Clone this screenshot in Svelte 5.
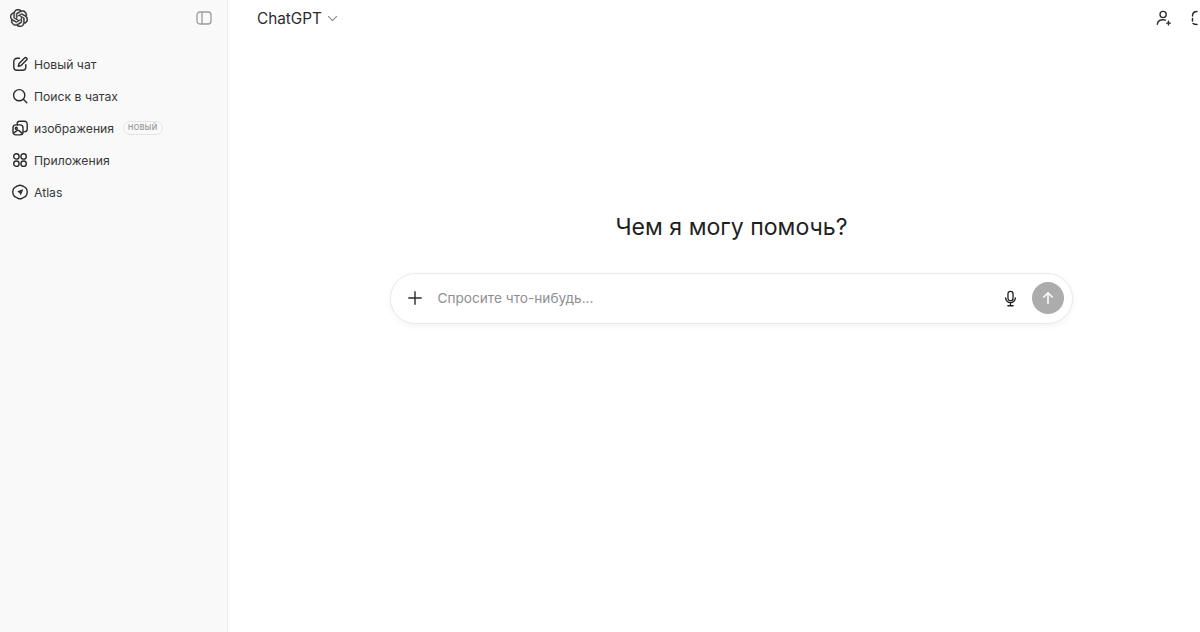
<script>
  const items = [
    { label: 'Новый чат', icon: 'edit' },
    { label: 'Поиск в чатах', icon: 'search' },
    { label: 'изображения', icon: 'images', badge: 'НОВЫЙ' },
    { label: 'Приложения', icon: 'apps' },
    { label: 'Atlas', icon: 'atlas' }
  ];
</script>

<div class="shell">
  <aside class="sidebar">
    <div class="side-head">
      <svg class="logo" viewBox="0 0 24 24" fill="#2f2f2f" stroke="#2f2f2f" stroke-width="0.4"><path d="M22.2819 9.8211a5.9847 5.9847 0 0 0-.5157-4.9108 6.0462 6.0462 0 0 0-6.5098-2.9A6.0651 6.0651 0 0 0 4.9807 4.1818a5.9847 5.9847 0 0 0-3.9977 2.9 6.0462 6.0462 0 0 0 .7427 7.0966 5.98 5.98 0 0 0 .511 4.9107 6.051 6.051 0 0 0 6.5146 2.9001A5.9847 5.9847 0 0 0 13.2599 24a6.0557 6.0557 0 0 0 5.7718-4.2058 5.9894 5.9894 0 0 0 3.9977-2.9001 6.0557 6.0557 0 0 0-.7475-7.0729zm-9.022 12.6081a4.4755 4.4755 0 0 1-2.8764-1.0408l.1419-.0804 4.7783-2.7582a.7948.7948 0 0 0 .3927-.6813v-6.7369l2.02 1.1686a.071.071 0 0 1 .038.052v5.5826a4.504 4.504 0 0 1-4.4945 4.4944zm-9.6607-4.1254a4.4708 4.4708 0 0 1-.5346-3.0137l.142.0852 4.783 2.7582a.7712.7712 0 0 0 .7806 0l5.8428-3.3685v2.3324a.0804.0804 0 0 1-.0332.0615L9.74 19.9502a4.4992 4.4992 0 0 1-6.1408-1.6464zM2.3408 7.8956a4.485 4.485 0 0 1 2.3655-1.9728V11.6a.7664.7664 0 0 0 .3879.6765l5.8144 3.3543-2.0201 1.1685a.0757.0757 0 0 1-.071 0l-4.8303-2.7865A4.504 4.504 0 0 1 2.3408 7.872zm16.5963 3.8558L13.1038 8.364 15.1192 7.2a.0757.0757 0 0 1 .071 0l4.8303 2.7913a4.4944 4.4944 0 0 1-.6765 8.1042v-5.6772a.79.79 0 0 0-.407-.667zm2.0107-3.0231l-.142-.0852-4.7735-2.7818a.7759.7759 0 0 0-.7854 0L9.409 9.2297V6.8974a.0662.0662 0 0 1 .0284-.0615l4.8303-2.7866a4.4992 4.4992 0 0 1 6.6802 4.66zM8.3065 12.863l-2.02-1.1638a.0804.0804 0 0 1-.038-.0567V6.0742a4.4992 4.4992 0 0 1 7.3757-3.4537l-.142.0805L8.704 5.459a.7948.7948 0 0 0-.3927.6813zm1.0976-2.3654l2.602-1.4998 2.6069 1.4998v2.9994l-2.5974 1.4997-2.6067-1.4997Z"/></svg>
      <svg class="toggle" viewBox="0 0 16 16" fill="none" stroke="#9a9a9a" stroke-width="1.3"><rect x="1" y="2" width="14" height="12" rx="3"/><path d="M6 2.2v11.6"/></svg>
    </div>
    <nav class="nav">
      {#each items as item}
        <div class="row">
          <svg class="icon" viewBox="0 0 16 16" fill="none" stroke="#2b2b2b" stroke-width="1.4" stroke-linecap="round" stroke-linejoin="round">
            {#if item.icon === 'edit'}
              <path d="M7.500 2.200H5A3.200 3.200 0 0 0 1.800 5.400v5.600A3.200 3.200 0 0 0 5 14.200h5.600a3.200 3.200 0 0 0 3.200-3.200V8.600"/>
              <path d="M12.600 1.900a1.400 1.400 0 0 1 2 2L9 9.500l-2.700.7.700-2.700z"/>
            {:else if item.icon === 'search'}
              <circle cx="7.200" cy="7.200" r="5.600"/>
              <path d="M11.300 11.300l3.500 3.500"/>
            {:else if item.icon === 'images'}
              <path d="M5.200 4.900V3.600A2.400 2.400 0 0 1 7.600 1.200h4.800a2.800 2.800 0 0 1 2.800 2.800v5.200a2.400 2.400 0 0 1-2.400 2.400h-1"/>
              <rect x="1" y="4.900" width="10" height="10" rx="2.800"/>
              <circle cx="4.300" cy="8.300" r="1"/>
              <path d="M1.400 13.300l3.800-2.900a1.200 1.200 0 0 1 1.500 0l3.900 3.200"/>
            {:else if item.icon === 'apps'}
              <circle cx="4.400" cy="4.400" r="2.700"/>
              <circle cx="11.600" cy="4.400" r="2.700"/>
              <circle cx="4.400" cy="11.700" r="2.700"/>
              <circle cx="11.600" cy="11.700" r="2.700"/>
            {:else}
              <path d="M8 1.200c1.400 0 2.400.9 3.800 1.400 1.700.6 3.400 2.600 3.400 5.400s-1.700 4.800-3.400 5.400c-1.400.5-2.400 1.400-3.800 1.400s-2.400-.9-3.800-1.400C2.500 12.800.8 10.800.8 8s1.700-4.800 3.400-5.400C5.600 2.100 6.600 1.200 8 1.200z"/>
              <path d="M10.300 5.900L5.800 7.700l2 .6.700 2z" fill="#2b2b2b" stroke-width="1"/>
            {/if}
          </svg>
          <span class="label">{item.label}</span>
          {#if item.badge}<span class="badge">{item.badge}</span>{/if}
        </div>
      {/each}
    </nav>
  </aside>

  <main class="main">
    <header class="top">
      <div class="model">
        <span>ChatGPT</span>
        <svg class="chev" viewBox="0 0 12 12" fill="none" stroke="#8a8a8a" stroke-width="1.2" stroke-linecap="round" stroke-linejoin="round"><path d="M1.500 3.800L6 8.300l4.500-4.500"/></svg>
      </div>
      <div class="actions">
        <svg class="act" viewBox="0 0 18 18" fill="none" stroke="#2b2b2b" stroke-width="1.5" stroke-linecap="round" stroke-linejoin="round">
          <circle cx="8" cy="5" r="3.500"/>
          <path d="M1.500 16c.3-3 3-5 6.500-5 1 0 1.900.2 2.600.5"/>
          <path d="M14 12.500v4.300M11.900 14.700h4.300"/>
        </svg>
        <svg class="act second" viewBox="0 0 18 18" fill="none" stroke="#2b2b2b" stroke-width="1.5" stroke-linecap="round" stroke-linejoin="round">
          <path d="M7 2.500C4 2.500 2.500 4 2.500 7M2.500 9.500V12M3 14.500c.8.700 2 1 4 1"/>
          <path d="M11 2.500c3 0 4.500 1.500 4.500 4.500v4c0 3-1.500 4.500-4.500 4.500"/>
        </svg>
      </div>
    </header>

    <section class="center">
      <h1>Чем я могу помочь?</h1>
      <div class="composer">
        <svg class="plus" viewBox="0 0 16 16" fill="none" stroke="#2b2b2b" stroke-width="1.400" stroke-linecap="round"><path d="M8 1.800v12.400M1.800 8h12.400"/></svg>
        <span class="placeholder">Спросите что-нибудь...</span>
        <svg class="mic" viewBox="0 0 16 18" fill="none" stroke="#222" stroke-width="1.400" stroke-linecap="round" stroke-linejoin="round">
          <rect x="5.300" y="1.300" width="5.400" height="10" rx="2.700"/>
          <path d="M2.800 8.300a5.200 5.200 0 0 0 10.400 0M8 13.600v3M5.200 16.700h5.600"/>
        </svg>
        <button class="send" aria-label="Отправить">
          <svg viewBox="0 0 14 14" fill="none" stroke="#fff" stroke-width="1.500" stroke-linecap="round" stroke-linejoin="round"><path d="M7 12.500V1.800M2.800 6L7 1.800 11.200 6"/></svg>
        </button>
      </div>
    </section>
  </main>
</div>

<style>
  :global(body) {
    margin: 0;
    overflow: hidden;
    background: #fff;
  }
  .shell {
    display: flex;
    width: 1235px;
    height: 632px;
    overflow: hidden;
    font-family: Inter, "Noto Sans", sans-serif;
    color: #2b2b2b;
  }
  .sidebar {
    width: 227px;
    flex: none;
    background: #f9f9f9;
    border-right: 1px solid #efefef;
  }
  .side-head {
    height: 36px;
    padding: 0 15px 0 10px;
    display: flex;
    align-items: center;
    justify-content: space-between;
  }
  .logo { width: 18px; height: 18px; }
  .toggle { width: 16px; height: 16px; }
  .nav {
    margin-top: 12px;
    display: flex;
    flex-direction: column;
  }
  .row {
    height: 32px;
    padding-left: 11.500px;
    display: flex;
    align-items: center;
    gap: 6.500px;
  }
  .icon { width: 16px; height: 16px; flex: none; }
  .label {
    font-size: 12.200px;
    color: #383838;
  }
  .badge {
    margin-left: 2px;
    height: 12px;
    padding: 0 4.500px;
    border: 1px solid #e4e4e4;
    border-radius: 8px;
    font-size: 7.200px;
    line-height: 12px;
    font-weight: 500;
    letter-spacing: 0.4px;
    color: #8e8e8e;
  }
  .main {
    flex: 1;
    display: flex;
    flex-direction: column;
    min-width: 0;
  }
  .top {
    height: 36px;
    padding: 0 27px 0 29px;
    display: flex;
    align-items: center;
    justify-content: space-between;
  }
  .model {
    display: flex;
    align-items: center;
    gap: 5px;
    font-size: 15.300px;
    color: #2b2b2b;
  }
  .chev { width: 11px; height: 11px; margin-top: 1px; }
  .actions { display: flex; align-items: center; gap: 18px; }
  .act { width: 16px; height: 16px; }
  .second { width: 18px; height: 18px; }
  .center {
    display: flex;
    flex-direction: column;
    align-items: center;
    padding-top: 176px;
  }
  h1 {
    margin: 0;
    font-size: 23.100px;
    line-height: 31px;
    font-weight: 400;
    color: #1f1f1f;
  }
  .composer {
    margin-top: 30px;
    box-sizing: border-box;
    width: 683px;
    height: 51px;
    padding: 0 8px 1px 16px;
    display: flex;
    align-items: center;
    background: #fff;
    border: 1px solid #e9e9e9;
    border-radius: 26px;
    box-shadow: 0 2px 6px rgba(0, 0, 0, 0.05);
  }
  .plus { width: 16px; height: 16px; flex: none; }
  .placeholder {
    flex: 1;
    margin-left: 14.500px;
    font-size: 13.650px;
    color: #8f8f8f;
  }
  .mic { width: 15px; height: 17px; flex: none; margin-right: 14px; }
  .send {
    width: 32px;
    height: 32px;
    padding: 0;
    border: none;
    border-radius: 50%;
    background: #acacac;
    display: flex;
    align-items: center;
    justify-content: center;
  }
  .send svg { width: 14px; height: 14px; }
</style>
